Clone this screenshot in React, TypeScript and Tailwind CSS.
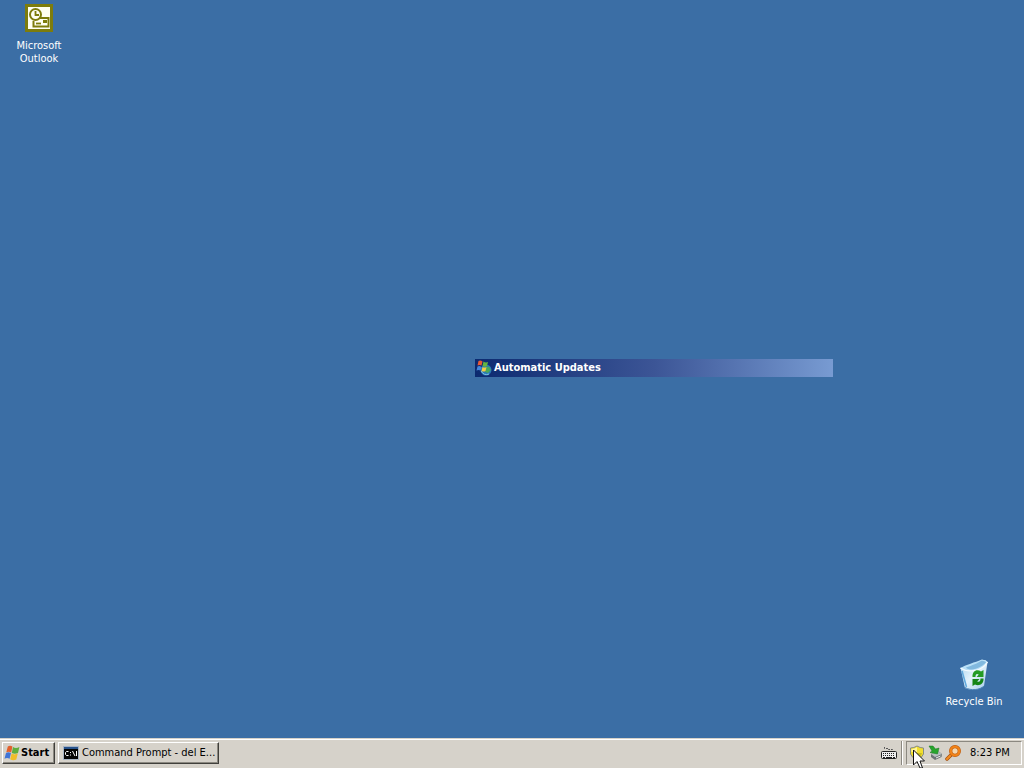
import type { ReactNode } from "react";

function WindowsFlag({ className }: { className: string }) {
  return (
    <svg viewBox="0 0 16 16" className={className} aria-hidden="true">
      <path d="M3.800 1.600C5.400 .4 7 .6 8.400 1.600L7.200 7.400C5.600 6.400 4 6.400 2.300 7.300Z" fill="#e2602c" />
      <path d="M9 2C10.800 3.200 13 3.200 15.400 2L14 7.900C12 9 9.800 9 7.800 7.900Z" fill="#5fae3c" />
      <path d="M2 8C3.600 7 5.200 7 7 8.100L5.600 13.800C4 12.800 2.200 12.800 .5 13.700Z" fill="#3f74d6" />
      <path d="M7.600 8.600C9.400 9.700 11.400 9.700 13.800 8.600L12.300 14.500C10.200 15.600 8 15.400 6.200 14.300Z" fill="#f0bd28" />
    </svg>
  );
}

function OutlookIcon() {
  return (
    <svg viewBox="0 0 28 28" className="size-7" aria-hidden="true">
      <rect width="28" height="28" fill="#7d7c0c" />
      <rect x="3" y="3" width="22" height="22" fill="#fffff2" />
      <path d="M15 14H23.500V22.500H8.500V17" fill="none" stroke="#7d7c0c" strokeWidth="2" />
      <circle cx="10.500" cy="10.500" r="5.500" fill="#fffff2" stroke="#7d7c0c" strokeWidth="2" />
      <path d="M10.500 7V11H14" fill="none" stroke="#7d7c0c" strokeWidth="1.800" />
      <path d="M11 19.500H16" stroke="#7d7c0c" strokeWidth="1.800" />
      <rect x="18" y="16" width="4" height="3" fill="#7d7c0c" />
    </svg>
  );
}

function RecycleIcon() {
  return (
    <svg viewBox="0 0 32 34" className="h-[34px] w-8" aria-hidden="true">
      <defs>
        <linearGradient id="bin" x1="0" y1="0" x2="1" y2="1">
          <stop offset="0" stopColor="#a5d2ee" />
          <stop offset=".5" stopColor="#e4f2fb" />
          <stop offset="1" stopColor="#a4cbea" />
        </linearGradient>
      </defs>
      <path d="M2.500 10C9 10 17 6 23 2C25.500 1.500 28 2.500 29.500 4L26 28C22 32 13 33 7 30Z" fill="url(#bin)" />
      <path d="M2.500 10C7 7 18 4 23 2C25.500 1.500 28 2.500 29.500 4C26 9 21 12 14 13C8 13 4 12 2.500 10Z" fill="#b9e0f7" />
      <path d="M8 9.500C14 7.500 20 5 23 3C25 2.500 27 3.500 28 4.500C24 8.500 19 11 14 11.500C11 11.500 9 11 8 9.500Z" fill="#81b9df" />
      <path d="M2.500 10C8 14 23 15 29.500 4" fill="none" stroke="#f4fbff" strokeWidth="1.300" />
      <path d="M4 13L8.500 29" fill="none" stroke="#61a8dc" strokeWidth="1.600" />
      <path d="M7 29.500C13 33 22 32 26 28" fill="none" stroke="#4c85ba" strokeWidth="1" />
      <path d="M14.500 19C14 13 19 10.500 23 13.500L25.500 12V19H18.500L20.800 16.500C18.500 15 17.500 16.500 17.500 19Z" fill="#249b24" />
      <path d="M25.500 20.500C26 26 21 28.500 17 26.500L14.500 28V21H21.500L19.200 23.500C21.500 24.500 22.500 23 22.500 20.500Z" fill="#168517" />
    </svg>
  );
}

function UpdateIcon() {
  return (
    <svg viewBox="0 0 16 16" className="size-4" aria-hidden="true">
      <circle cx="10" cy="10" r="5.500" fill="#2877b8" />
      <path d="M10 7L13 6.500L15 10L12 13L9 12Z" fill="#48a85a" />
      <path d="M5 11Q8 16 13 14" fill="none" stroke="#83c6e4" />
      <path d="M2.500 1Q4.500 0 6.500 1.500L5.500 5.500Q3.500 4.500 1.500 5.500Z" fill="#e85935" />
      <path d="M7.500 1.500Q9.500 3 12 2L11 6Q9 7.500 6.500 6Z" fill="#64b63f" />
      <path d="M1.500 6.500Q3.500 5.500 5.500 7L4.500 10.500Q2.500 9.500 .5 10.500Z" fill="#4586dc" />
      <path d="M6.500 7Q8.500 8 10.500 7L9.500 11Q7.500 12 5.500 11Z" fill="#f4cc42" />
    </svg>
  );
}

function PromptIcon() {
  return (
    <svg viewBox="0 0 16 16" className="size-4" aria-hidden="true">
      <rect y="1" width="16" height="14" fill="#a8b4c4" />
      <rect x="1" y="2" width="14" height="2" fill="#28538c" />
      <rect x="1" y="4" width="14" height="10" fill="#050505" />
      <path d="M5.500 6.500H3.500L2.500 7.500V9.500L3.500 10.500H5.500M7.500 7V8M7.500 9.500V10.500M9.500 6L12 11M13.500 6V11" fill="none" stroke="#fff" strokeWidth="1" />
    </svg>
  );
}

function KeyboardIcon() {
  return (
    <svg viewBox="0 0 16 14" className="h-3.5 w-4" aria-hidden="true">
      <path d="M3.500 1V2.500H7.500V3.500H11.500V5" fill="none" stroke="#555" strokeDasharray="2 1" />
      <rect x=".5" y="5.500" width="15" height="7" rx="1" fill="#eee" stroke="#222" />
      <path d="M2 7.500H14M2 9.500H14" stroke="#222" strokeDasharray="1 1" />
      <path d="M2 11.500H4M5 11.500H11M12 11.500H14" stroke="#222" />
    </svg>
  );
}

function ShieldIcon() {
  return (
    <svg viewBox="0 0 16 16" className="size-4" aria-hidden="true">
      <path d="M8 1Q11 3 14.500 3V9Q13 13 8 15Q3 13 1.500 9V3Q5 3 8 1Z" fill="#f2df2e" stroke="#858b86" />
      <path d="M2.500 4Q6 4 8 2V7H2.500Z" fill="#fff69a" />
      <path d="M8 8H13Q12 12 8 14Z" fill="#cabd20" />
    </svg>
  );
}

function DeviceIcon() {
  return (
    <svg viewBox="0 0 16 16" className="size-4" aria-hidden="true">
      <path d="M4 9L11 6L15 9L14.500 12L8 15L4 12Z" fill="#6c7375" />
      <path d="M4 9L11 6L15 9L8 12Z" fill="#b9c0c1" />
      <path d="M9 13L13.500 11" stroke="#eee" />
      <path d="M2 1H6L8.500 4L12 3L10.500 9L3 7.500L5 6Z" fill="#28a52d" stroke="#177422" strokeWidth=".5" />
    </svg>
  );
}

function MagnifierIcon() {
  return (
    <svg viewBox="0 0 16 16" className="size-4" aria-hidden="true">
      <path d="M6 10L2 14" stroke="#9e4b0c" strokeWidth="3.500" strokeLinecap="round" />
      <path d="M6 10L2 14" stroke="#f28c22" strokeWidth="2.300" strokeLinecap="round" />
      <circle cx="10" cy="6" r="4.300" fill="#f5d7ae" stroke="#b65812" strokeWidth="3.300" />
      <circle cx="10" cy="6" r="4.300" fill="none" stroke="#f28317" strokeWidth="2.300" />
    </svg>
  );
}

function DesktopIcon({ label, className, children }: { label: string; className: string; children: ReactNode }) {
  return (
    <button type="button" className={`absolute flex flex-col items-center text-center leading-[13px] text-white ${className}`}>
      {children}
      <span>{label}</span>
    </button>
  );
}

const raised =
  "flex h-[22px] items-center border border-t-white border-l-white border-r-[#403f3b] border-b-[#403f3b] bg-[#d6d2ca] shadow-[inset_-1px_-1px_0_#8b8880]";

export default function App() {
  return (
    <div className="flex h-screen flex-col overflow-hidden bg-[#3b6ea5] font-['DejaVu_Sans_Condensed','DejaVu_Sans',sans-serif] text-[11px] text-black">
      <main className="relative min-h-0 flex-1">
        <DesktopIcon label="Microsoft Outlook" className="top-1 left-1 w-[70px] gap-[7px]">
          <OutlookIcon />
        </DesktopIcon>
        <section
          aria-label="Automatic Updates"
          className="absolute top-[359px] left-[475px] flex h-[18px] w-[358px] items-center gap-0.5 bg-linear-to-r from-[#0c2a70] via-[#3c5596] via-50% to-[#789bd2] px-px font-bold text-white"
        >
          <UpdateIcon />
          <h1>Automatic Updates</h1>
        </section>
        <DesktopIcon label="Recycle Bin" className="right-3 bottom-[30px] w-[76px] gap-[3px]">
          <RecycleIcon />
        </DesktopIcon>
      </main>

      <footer className="relative flex h-[30px] shrink-0 items-center border-t border-[#d6d2ca] bg-[#d6d2ca] px-0.5 pt-px pb-0.5 shadow-[inset_0_1px_0_#fff]">
        <button type="button" className={`${raised} w-[53px] gap-px pl-px font-bold`}>
          <WindowsFlag className="size-4" />
          Start
        </button>
        <button type="button" className={`${raised} ml-[3px] w-[161px] gap-[3px] pl-1`}>
          <PromptIcon />
          <span className="whitespace-nowrap">Command Prompt - del E...</span>
        </button>
        <button type="button" aria-label="Keyboard" className="mr-1 ml-auto">
          <KeyboardIcon />
        </button>
        <div className="mr-[3px] h-6 w-0.5 border-r border-l border-r-white border-l-[#8b8880]" />
        <div className="flex h-6 w-[116px] items-center gap-0.5 border border-t-[#8b8880] border-r-white border-b-white border-l-[#8b8880] pl-0.5">
          <button type="button" aria-label="Updates"><ShieldIcon /></button>
          <button type="button" aria-label="Safely remove hardware"><DeviceIcon /></button>
          <button type="button" aria-label="Search"><MagnifierIcon /></button>
          <time className="ml-[7px] whitespace-nowrap">8:23 PM</time>
        </div>
        <svg viewBox="0 0 12 19" className="pointer-events-none absolute right-[99px] bottom-0 h-[19px] w-3" aria-hidden="true">
          <path d="M.5 1V16L4 12.500L7 19H9.500L7 12H11.500Z" fill="#fff" stroke="#111" />
        </svg>
      </footer>
    </div>
  );
}
